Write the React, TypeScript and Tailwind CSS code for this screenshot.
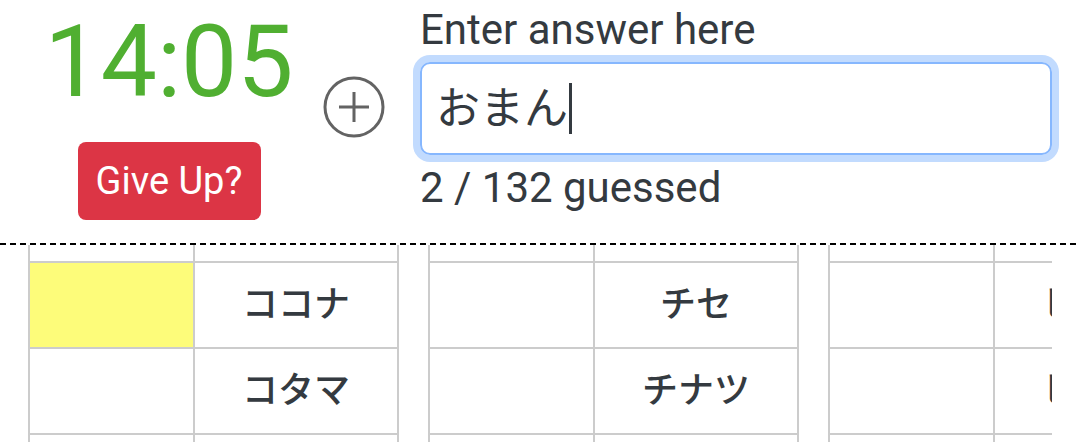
import { useMemo } from "react";

type Row = { name: string; found: boolean; highlight?: boolean };

const TABLES: Row[][] = [
  [
    { name: "ココナ", found: true, highlight: true },
    { name: "コタマ", found: true },
    { name: "コハル", found: false },
  ],
  [
    { name: "チセ", found: true },
    { name: "チナツ", found: true },
    { name: "ツバキ", found: false },
  ],
  [
    { name: "ヒビキ", found: true },
    { name: "ヒフミ", found: true },
    { name: "ヒヨリ", found: false },
  ],
];

const font = "font-['Roboto','Noto_Sans_CJK_JP',sans-serif]";

function PlusCircle() {
  return (
    <svg width="62" height="62" viewBox="0 0 62 62" aria-hidden="true">
      <circle cx="31" cy="31" r="29" fill="none" stroke="#636363" strokeWidth="3" />
      <path d="M16 31h30M31 16v30" stroke="#636363" strokeWidth="3" strokeLinecap="butt" />
    </svg>
  );
}

function NameTable({ rows }: { rows: Row[] }) {
  return (
    <div className="grid w-[371px] shrink-0 grid-cols-[165px_204px] border-l-2 border-[#cccccc]">
      {/* partial header row, scrolled under the rule */}
      <div className="h-[18px] border-r-2 border-b-2 border-[#cccccc]" />
      <div className="h-[18px] border-r-2 border-b-2 border-[#cccccc]" />
      {rows.map((r, i) => (
        <div key={i} className="contents">
          <div
            className={
              "h-[86px] border-r-2 border-b-2 border-[#cccccc] " +
              (r.highlight ? "bg-[#fdfc7a]" : "bg-white")
            }
          />
          <div className="flex h-[86px] items-center justify-center border-r-2 border-b-2 border-[#cccccc] text-[36px] font-medium whitespace-nowrap text-[#343a40]">
            {r.found ? r.name : ""}
          </div>
        </div>
      ))}
    </div>
  );
}

export default function App() {
  const guessed = useMemo(() => 2, []);

  return (
    <div className={`h-[442px] w-[1080px] overflow-hidden bg-white ${font}`}>
      {/* header: timer, add button, answer input */}
      <div className="flex h-[243px] px-[28px]">
        <div className="flex w-[282px] flex-col items-center pt-[12px]">
          <div className="text-[100px] leading-none font-normal text-[#50af31]">14:05</div>
          <button className="mt-[30px] flex h-[78px] w-[183px] items-center justify-center rounded-[8px] bg-[#dc3545] text-[38px] text-white">
            Give Up?
          </button>
        </div>
        <div className="mt-[76px] ml-[13px]">
          <PlusCircle />
        </div>
        <div className="ml-[35px] flex flex-1 flex-col pt-[6px]">
          <label className="text-[42px] leading-[48px] text-[#343a40]">Enter answer here</label>
          <div className="mt-[8px] flex h-[93px] items-center rounded-[10px] border-2 border-[#86b7fe] pl-[14px] shadow-[0_0_0_7px_#c2dbfe]">
            <span className="text-[44px] leading-none font-normal text-[#343a40]">おまん</span>
            <span className="ml-[1px] h-[51px] w-[3px] bg-[#343a40]" />
          </div>
          <div className="mt-[9px] text-[42px] leading-[48px] text-[#343a40]">
            {guessed} / 132 guessed
          </div>
        </div>
      </div>

      {/* dashed rule */}
      <div className="h-[2px] w-full bg-[image:repeating-linear-gradient(90deg,#000_0_6px,transparent_6px_10px)]" />

      {/* answer tables */}
      <div className="px-[28px]">
        <div className="flex gap-[29px] overflow-hidden">
          {TABLES.map((rows, i) => (
            <NameTable key={i} rows={rows} />
          ))}
        </div>
      </div>
    </div>
  );
}
